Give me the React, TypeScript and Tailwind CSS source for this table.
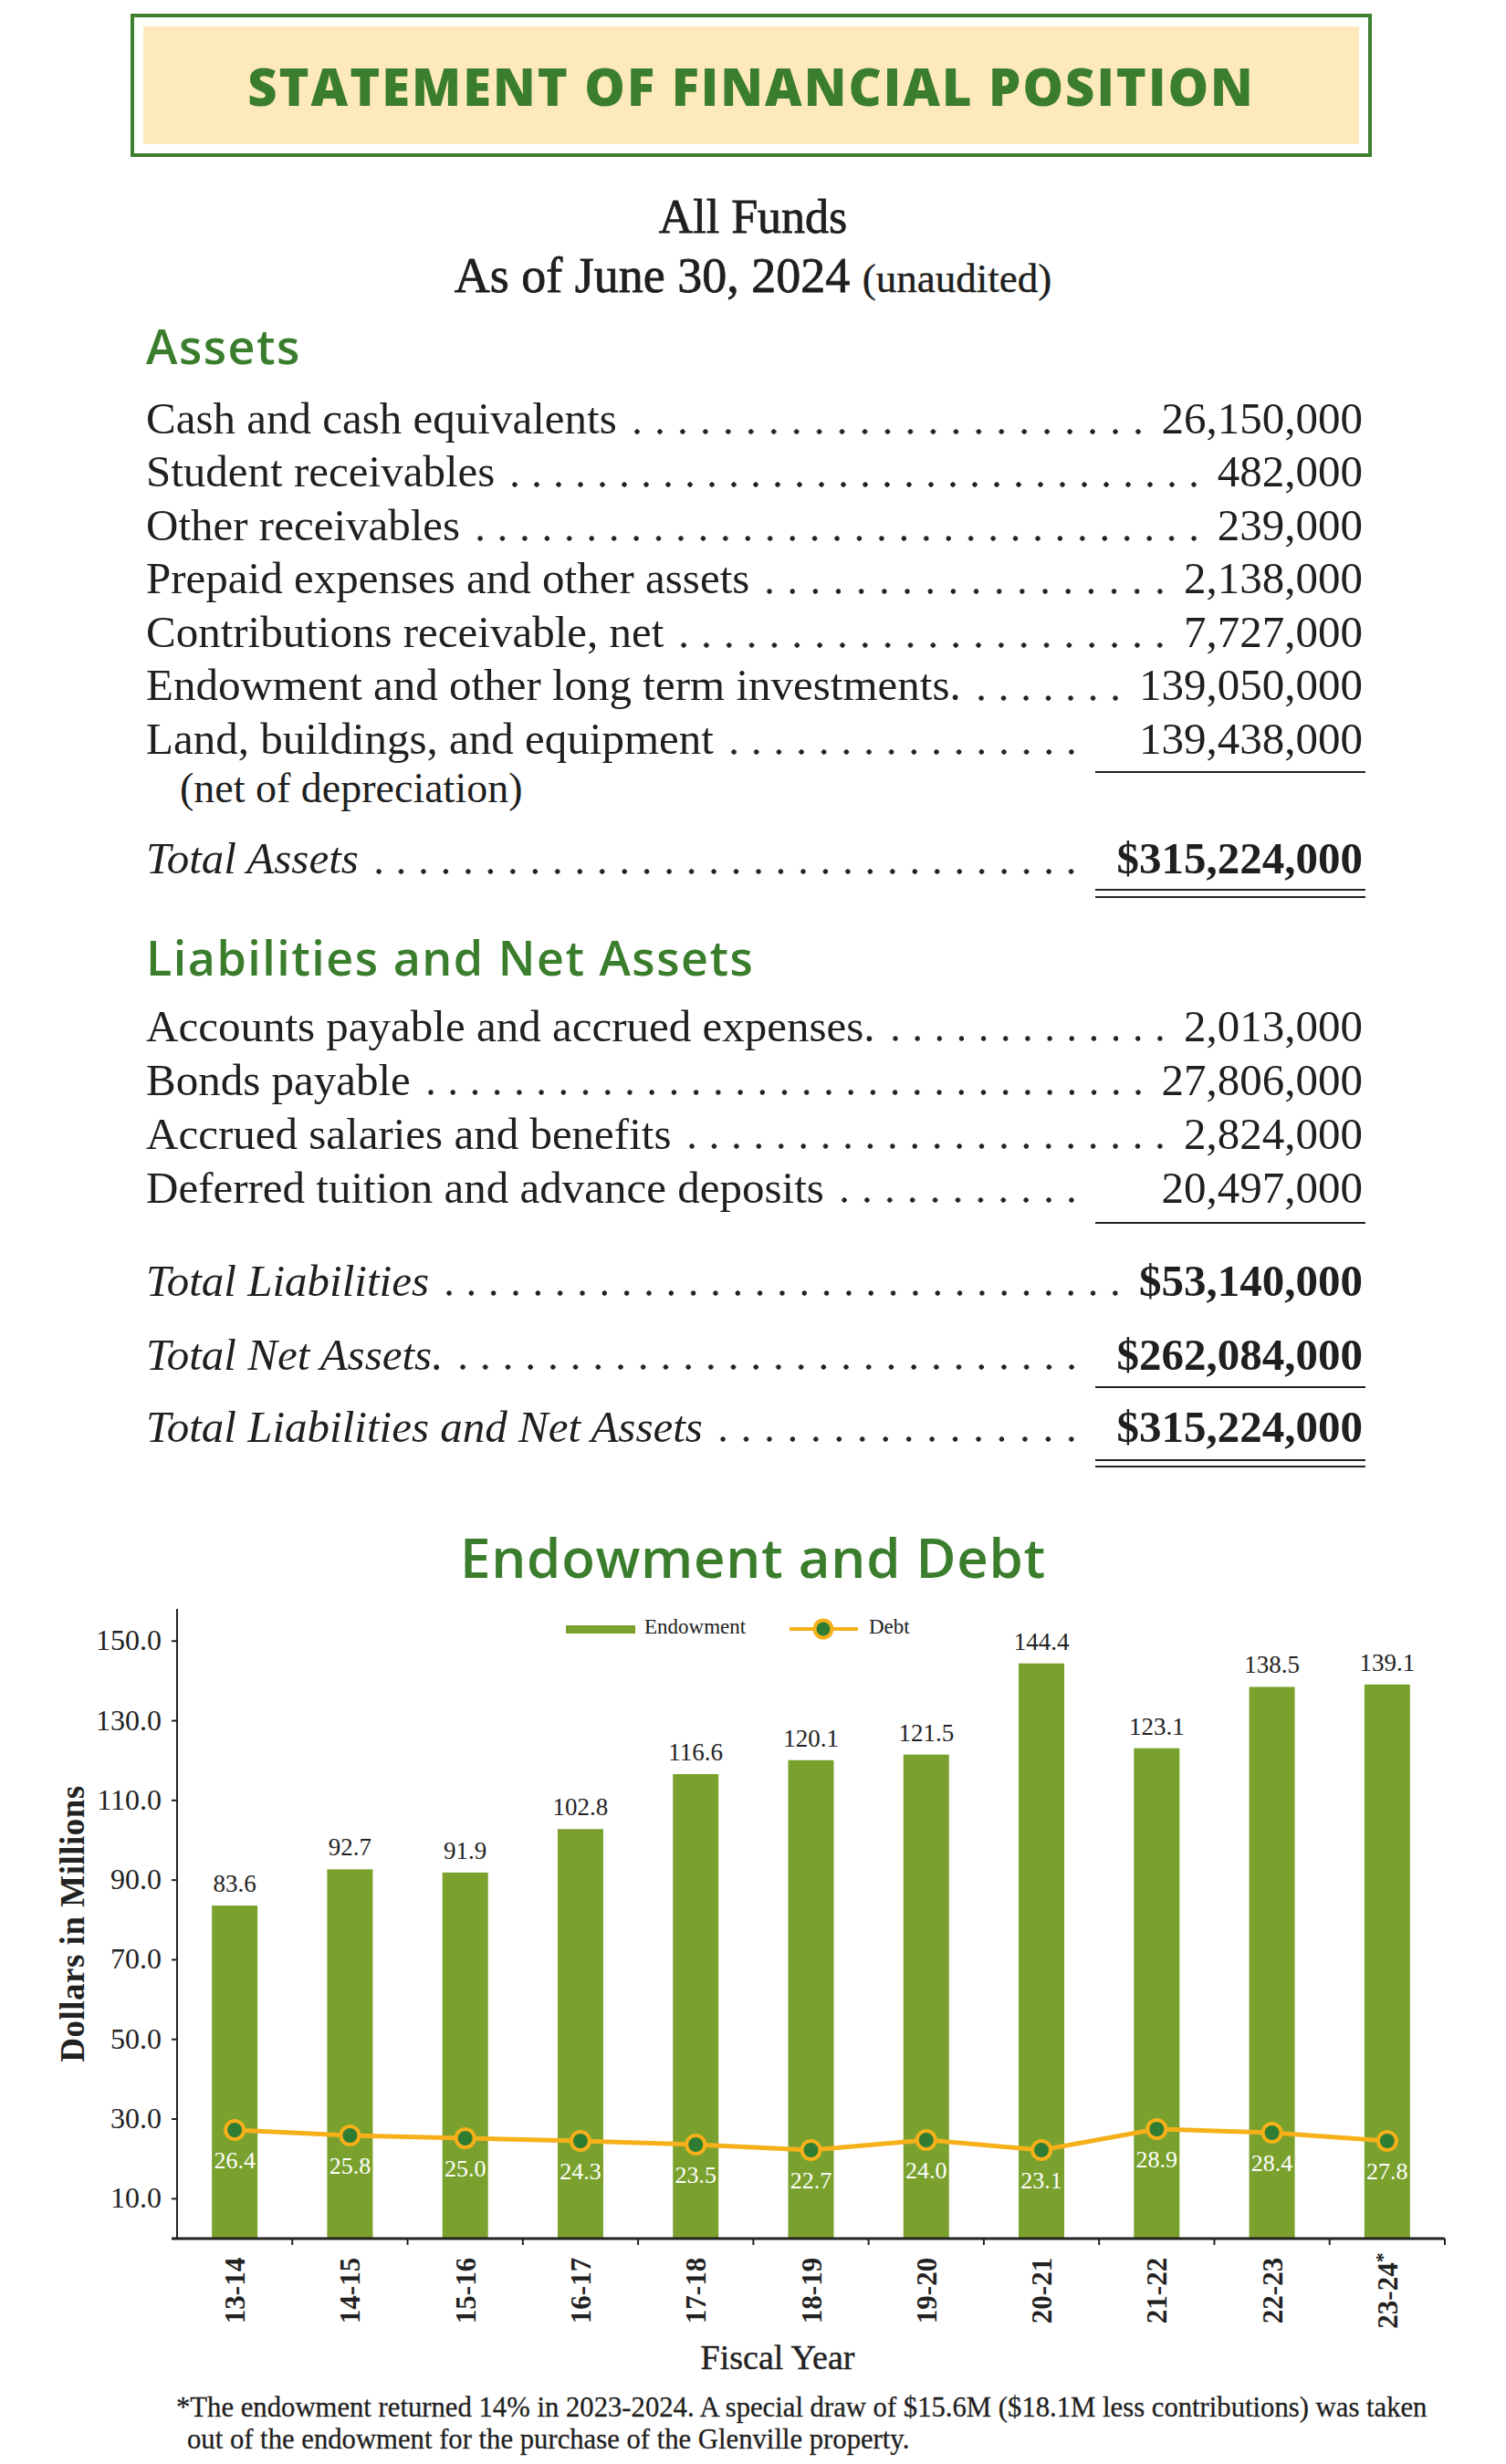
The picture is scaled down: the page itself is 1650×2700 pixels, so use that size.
import React from 'react';

const serif = "font-['Liberation_Serif',serif]";
const sans = "font-['Open_Sans',sans-serif]";

// y positions of the debt markers as drawn in the printed chart
const years = [
  { fy: '13-14', endow: 83.6, debt: '26.4', y: 2331 },
  { fy: '14-15', endow: 92.7, debt: '25.8', y: 2337 },
  { fy: '15-16', endow: 91.9, debt: '25.0', y: 2340 },
  { fy: '16-17', endow: 102.8, debt: '24.3', y: 2343 },
  { fy: '17-18', endow: 116.6, debt: '23.5', y: 2347 },
  { fy: '18-19', endow: 120.1, debt: '22.7', y: 2353 },
  { fy: '19-20', endow: 121.5, debt: '24.0', y: 2342 },
  { fy: '20-21', endow: 144.4, debt: '23.1', y: 2353 },
  { fy: '21-22', endow: 123.1, debt: '28.9', y: 2330 },
  { fy: '22-23', endow: 138.5, debt: '28.4', y: 2334 },
  { fy: '23-24', endow: 139.1, debt: '27.8', y: 2343, star: true },
];

const X0 = 194;
const X1 = 1583;
const BASE = 2450;
const K = 4.365;
const STEP = (X1 - X0) / years.length;

// dotted leader drawn as a background so the dots sit on the text baseline
const Leader = () => (
  <span className="ml-[10px] mr-[14px] h-[58px] flex-1 bg-[radial-gradient(circle,#222_2.4px,transparent_3px)] bg-[length:24px_8px] bg-[position:right_top_39px] [background-repeat:space_no-repeat]" />
);

type RowProps = { label: string; value: string; lh?: string };

const Row = ({ label, value, lh = 'leading-[58.5px]' }: RowProps) => (
  <div className={`flex items-start ${lh}`}>
    <span className="whitespace-nowrap">{label}</span>
    <Leader />
    <span className="whitespace-nowrap pr-[3px]">{value}</span>
  </div>
);

const EndowmentChart = () => {
  const ticks = [10, 30, 50, 70, 90, 110, 130, 150];
  const pts = years.map((d, i) => `${X0 + STEP * (i + 0.5)},${d.y}`).join(' ');
  return (
    <svg
      width="1650"
      height="867"
      viewBox="0 1738 1650 867"
      className={`block ${serif}`}
    >
      {/* legend */}
      <rect x="620" y="1778" width="76" height="9" fill="#7aa12e" />
      <text x="706" y="1787" fontSize="23" fill="#222">Endowment</text>
      <line x1="865" y1="1782" x2="940" y2="1782" stroke="#f6b01a" strokeWidth="4" />
      <circle cx="902" cy="1782" r="9.5" fill="#2f7d32" stroke="#f6b01a" strokeWidth="4" />
      <text x="952" y="1787" fontSize="23" fill="#222">Debt</text>

      {/* bars */}
      {years.map((d, i) => {
        const c = X0 + STEP * (i + 0.5);
        const top = BASE - d.endow * K;
        return (
          <g key={d.fy}>
            <rect x={c - 25} y={top} width="50" height={BASE - top} fill="#7aa12e" />
            <text x={c} y={top - 15} fontSize="27" textAnchor="middle" fill="#222">
              {d.endow.toFixed(1)}
            </text>
          </g>
        );
      })}

      {/* axes */}
      <line x1={X0} y1="1760" x2={X0} y2={BASE + 1} stroke="#222" strokeWidth="2" />
      <line x1={X0 - 6} y1={BASE} x2={X1} y2={BASE} stroke="#222" strokeWidth="3" />
      {ticks.map((t) => {
        const y = BASE - t * K;
        return (
          <g key={t}>
            <line x1={X0 - 6} y1={y} x2={X0} y2={y} stroke="#222" strokeWidth="2" />
            <text x="177" y={y + 10} fontSize="32" textAnchor="end" fill="#222">
              {t.toFixed(1)}
            </text>
          </g>
        );
      })}
      {years.map((d, i) => (
        <line
          key={d.fy}
          x1={X0 + STEP * (i + 1)}
          y1={BASE}
          x2={X0 + STEP * (i + 1)}
          y2={BASE + 7}
          stroke="#222"
          strokeWidth="2"
        />
      ))}

      {/* debt line */}
      <polyline points={pts} fill="none" stroke="#f6b01a" strokeWidth="5" />
      {years.map((d, i) => {
        const c = X0 + STEP * (i + 0.5);
        return (
          <g key={d.fy}>
            <circle cx={c} cy={d.y} r="10" fill="#2f7d32" stroke="#f6b01a" strokeWidth="4" />
            <text x={c} y={d.y + 42} fontSize="26" textAnchor="middle" fill="#fff">
              {d.debt}
            </text>
          </g>
        );
      })}

      {/* x labels */}
      {years.map((d, i) => {
        const c = X0 + STEP * (i + 0.5);
        return (
          <text
            key={d.fy}
            transform={`translate(${c + 11},2507) rotate(-90)`}
            fontSize="31"
            fontWeight="bold"
            textAnchor="middle"
            fill="#222"
          >
            {d.fy}
            {d.star && (
              <tspan fontSize="22" dy="-9">*</tspan>
            )}
          </text>
        );
      })}

      <text
        transform="translate(92,2105) rotate(-90)"
        fontSize="37"
        fontWeight="bold"
        textAnchor="middle"
        letterSpacing="0.5"
        fill="#222"
      >
        Dollars in Millions
      </text>
      <text
        x="852"
        y="2593"
        fontSize="38"
        textAnchor="middle"
        fill="#222"
        stroke="#222"
        strokeWidth="0.4"
      >
        Fiscal Year
      </text>
    </svg>
  );
};

export default function App() {
  return (
    <div className={`w-[1650px] bg-white text-[#1f1f1f] ${serif}`}>
      {/* Title box */}
      <div className="ml-[143px] mt-[15px] w-[1360px] border-4 border-[#3e7f30] p-[10px]">
        <div className="flex h-[129px] items-center justify-center bg-[#fde9bb]">
          <h1 className={`${sans} text-[56px] font-extrabold leading-none tracking-[2px] text-[#3a7d2c]`}>
            STATEMENT OF FINANCIAL POSITION
          </h1>
        </div>
      </div>

      {/* Subtitle */}
      <div className="mt-[33.5px] text-center text-[52px] leading-[64px] [-webkit-text-stroke:0.8px_#1f1f1f]">
        All Funds
      </div>
      <div className="text-center text-[54px] leading-[64px]">
        <span className="[-webkit-text-stroke:0.8px_#1f1f1f]">As of June 30, 2024</span>{' '}
        <span className="text-[45px] [-webkit-text-stroke:0.4px_#1f1f1f]">(unaudited)</span>
      </div>

      <div className="ml-[160px] w-[1336px] text-[49px]">
        {/* Assets */}
        <h2 className={`${sans} mt-[14px] text-[52px] font-semibold leading-[56px] tracking-[1.5px] text-[#3a7d2c]`}>
          Assets
        </h2>
        <div className="mt-[23px]">
          <Row label="Cash and cash equivalents" value="26,150,000" />
          <Row label="Student receivables" value="482,000" />
          <Row label="Other receivables" value="239,000" />
          <Row label="Prepaid expenses and other assets" value="2,138,000" />
          <Row label="Contributions receivable, net" value="7,727,000" />
          <Row label="Endowment and other long term investments." value="139,050,000" />
          <div className="flex items-start">
            <div>
              <div className="whitespace-nowrap leading-[58.5px]">Land, buildings, and equipment</div>
              <div className="pl-[37px] text-[46px] leading-[50px]">(net of depreciation)</div>
            </div>
            <Leader />
            <div className="w-[296px] border-b-2 border-[#222] pb-[6px] pr-[3px] text-right leading-[58.5px]">
              139,438,000
            </div>
          </div>
        </div>

        <div className="mt-[23px] flex items-start leading-[58.5px]">
          <span className="whitespace-nowrap italic">Total Assets</span>
          <Leader />
          <div className="w-[296px] border-b-2 border-[#222] pb-[6px]">
            <div className="border-b-2 border-[#222] pb-[3px] pr-[3px] text-right font-bold">
              $315,224,000
            </div>
          </div>
        </div>

        {/* Liabilities */}
        <h2 className={`${sans} mt-[37px] text-[52px] font-semibold leading-[56px] tracking-[1.5px] text-[#3a7d2c]`}>
          Liabilities and Net Assets
        </h2>
        <div className="mt-[18px]">
          <Row lh="leading-[59px]" label="Accounts payable and accrued expenses." value="2,013,000" />
          <Row lh="leading-[59px]" label="Bonds payable" value="27,806,000" />
          <Row lh="leading-[59px]" label="Accrued salaries and benefits" value="2,824,000" />
          <div className="flex items-start leading-[59px]">
            <span className="whitespace-nowrap">Deferred tuition and advance deposits</span>
            <Leader />
            <div className="w-[296px] border-b-2 border-[#222] pb-[8px] pr-[3px] text-right">20,497,000</div>
          </div>
        </div>

        <div className="mt-[33px] flex items-start leading-[59px]">
          <span className="whitespace-nowrap italic">Total Liabilities</span>
          <Leader />
          <span className="whitespace-nowrap pr-[3px] font-bold">$53,140,000</span>
        </div>
        <div className="mt-[22px] flex items-start leading-[59px]">
          <span className="whitespace-nowrap italic">Total Net Assets.</span>
          <Leader />
          <div className="w-[296px] border-b-2 border-[#222] pb-[5px] pr-[3px] text-right font-bold">
            $262,084,000
          </div>
        </div>
        <div className="mt-[13px] flex items-start leading-[59px]">
          <span className="whitespace-nowrap italic">Total Liabilities and Net Assets</span>
          <Leader />
          <div className="w-[296px] border-b-2 border-[#222] pb-[5px]">
            <div className="border-b-2 border-[#222] pb-[6px] pr-[3px] text-right font-bold">$315,224,000</div>
          </div>
        </div>
      </div>

      {/* Chart */}
      <h2 className={`${sans} mt-[63px] text-center text-[60px] font-semibold leading-[70px] tracking-[0.7px] text-[#3a7d2c]`}>
        Endowment and Debt
      </h2>
      <EndowmentChart />

      <p className="mt-[13px] pb-[20px] pl-[205px] text-[30.7px] leading-[35px] -indent-[12px] [-webkit-text-stroke:0.3px_#1f1f1f]">
        *The endowment returned 14% in 2023-2024. A special draw of $15.6M ($18.1M less contributions) was taken
        <br />
        out of the endowment for the purchase of the Glenville property.
      </p>
    </div>
  );
}
